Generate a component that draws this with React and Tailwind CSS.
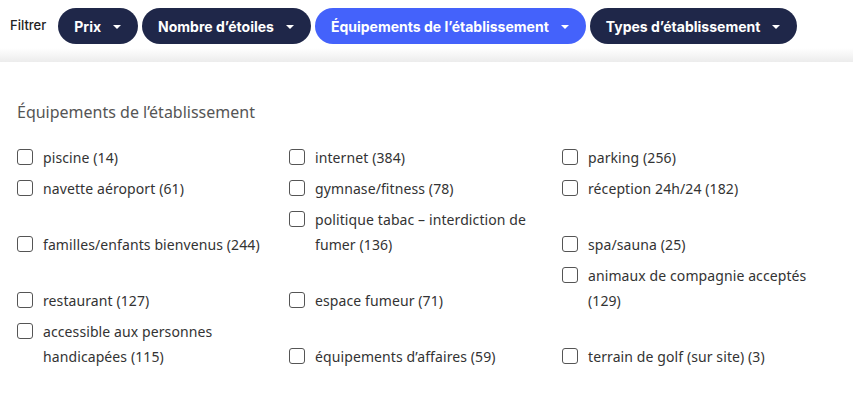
import React from "react";

const cols = [
  ["piscine (14)", "internet (384)", "parking (256)"],
  ["navette aéroport (61)", "gymnase/fitness (78)", "réception 24h/24 (182)"],
  ["familles/enfants bienvenus (244)", "politique tabac – interdiction de fumer (136)", "spa/sauna (25)"],
  ["restaurant (127)", "espace fumeur (71)", "animaux de compagnie acceptés (129)"],
  ["accessible aux personnes handicapées (115)", "équipements d’affaires (59)", "terrain de golf (sur site) (3)"],
];

function Caret() {
  return (
    <svg width="10" height="6" viewBox="0 0 10 6" className="ml-[11px] mt-[1px]">
      <path d="M1 1h8L5 5z" fill="currentColor" />
    </svg>
  );
}

function Pill({ label, active }) {
  return (
    <button
      className={`flex h-9 items-center rounded-full px-4 text-[14px] font-bold text-white ${
        active ? "bg-[#4462fb]" : "bg-[#1f2749]"
      }`}
    >
      {label}
      <Caret />
    </button>
  );
}

function Item({ label }) {
  return (
    <div className="flex items-start">
      <span className="mt-[4px] h-4 w-4 shrink-0 rounded-[3px] border border-[#555]" />
      <span className="ml-[10px] pr-2 text-[14px] leading-[25px] tracking-[0.1px] text-[#333]">{label}</span>
    </div>
  );
}

export default function App() {
  return (
    <div className="h-[397px] w-[853px] bg-white" style={{ fontFamily: "'Noto Sans', sans-serif" }}>
      <div className="flex items-center pl-[10px] pt-[8px]" style={{ fontFamily: "Inter, sans-serif" }}>
        <span className="mr-[12px] text-[13px] font-medium text-[#222]">Filtrer</span>
        <div className="flex gap-1">
          <Pill label="Prix" />
          <Pill label="Nombre d’étoiles" />
          <Pill label="Équipements de l’établissement" active />
          <Pill label="Types d’établissement" />
        </div>
      </div>
      <div className="mt-[4px] h-[14px] bg-gradient-to-b from-white to-[#ececec]" />
      <div className="px-[17px] pt-[39px]">
        <h2 className="text-[16px] leading-[22px] text-[#555]">Équipements de l’établissement</h2>
        <div className="mt-[22px] grid grid-cols-[272px_273px_1fr] items-end gap-y-[6px]">
          {cols.flat().map((l) => (
            <Item key={l} label={l} />
          ))}
        </div>
      </div>
    </div>
  );
}
